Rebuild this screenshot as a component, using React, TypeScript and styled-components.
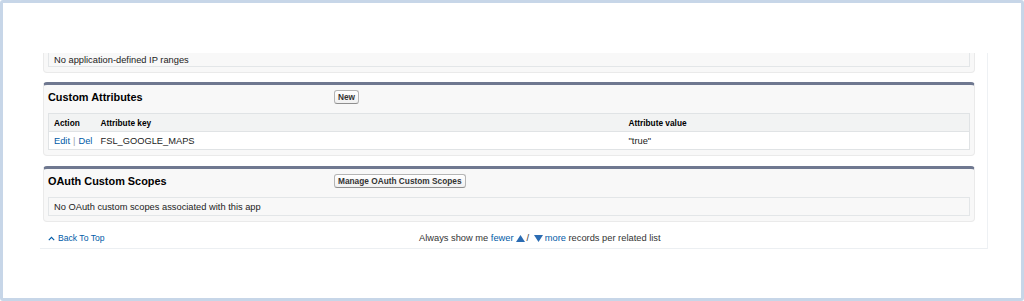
import React from 'react';
import styled, { createGlobalStyle } from 'styled-components';

const GlobalStyle = createGlobalStyle`
  html, body {
    margin: 0;
    padding: 0;
    background: #ffffff;
  }
  body {
    font-family: "Liberation Sans", Arial, sans-serif;
  }
`;

// Styles
const Frame = styled.div`
  box-sizing: border-box;
  width: 1024px;
  height: 301px;
  border: 3px solid #c7d6e8;
  border-radius: 3px;
  background: #ffffff;
  padding-top: 50px;
  overflow: hidden;
`;

const RelatedLists = styled.div`
  margin-left: 37px;
  width: 948px;
  box-sizing: border-box;
  padding: 0 12px 0 3px;
  border-right: 1px solid #eef1f4;
  border-bottom: 1px solid #eceff2;
`;

const Block = styled.div<{ $cut?: boolean; $gap?: number }>`
  box-sizing: border-box;
  background: #f8f8f8;
  border: 1px solid #eaeaea;
  border-top: ${(p) => (p.$cut ? 'none' : '3px solid #6f7890')};
  border-radius: ${(p) => (p.$cut ? '0 0 4px 4px' : '4px')};
  margin-top: ${(p) => p.$gap ?? 0}px;
  padding: 0 4px 5px;
`;

const BlockHeader = styled.div`
  display: flex;
  align-items: center;
  padding: 5px 0;
`;

const Title = styled.h3`
  margin: 0;
  width: 286px;
  flex-shrink: 0;
  font-size: 10.9px;
  font-weight: bold;
  color: #000;
  line-height: 14px;
`;

const Button = styled.button`
  font-family: "Liberation Sans", Arial, sans-serif;
  font-size: 8.3px;
  font-weight: bold;
  color: #333;
  background: linear-gradient(#ffffff, #f1f1f1);
  border: 1px solid #b5b5b5;
  border-bottom-color: #8f8f8f;
  border-radius: 3px;
  padding: 0 3px;
  margin: 0;
  line-height: 12px;
  cursor: pointer;
`;

const NoRecords = styled.div<{ $cut?: boolean }>`
  box-sizing: border-box;
  height: ${(p) => (p.$cut ? 14 : 19)}px;
  margin-top: ${(p) => (p.$cut ? 0 : 4)}px;
  display: flex;
  align-items: center;
  padding: 0 5px;
  font-size: 9.3px;
  color: #222;
  background: #f8f8f8;
  border: 1px solid #e3e6e8;
  border-top: ${(p) => (p.$cut ? 'none' : '1px solid #e3e6e8')};
`;

const Table = styled.table`
  width: 100%;
  table-layout: fixed;
  margin-top: 4px;
  border-collapse: collapse;
  border: 1px solid #e0e3e5;
  background: #ffffff;
  font-size: 9.3px;
`;

const Th = styled.th<{ $w?: number }>`
  box-sizing: border-box;
  width: ${(p) => (p.$w ? `${p.$w}px` : 'auto')};
  height: 18px;
  padding: 0 5px;
  text-align: left;
  font-size: 8.3px;
  font-weight: bold;
  color: #000;
  background: #f2f3f3;
  border-bottom: 1px solid #e0e3e5;
`;

const Td = styled.td`
  height: 17px;
  padding: 0 4px 0 5px;
  color: #222;
  white-space: nowrap;
`;

const Link = styled.a`
  color: #015ba7;
  text-decoration: none;
  cursor: pointer;
`;

const Pipe = styled.span`
  color: #9aa4ad;
  margin: 0 3px;
`;

const Footer = styled.div`
  display: flex;
  align-items: center;
  height: 20px;
  margin-top: 6px;
  padding-left: 5px;
  font-size: 9.3px;
  color: #333;
`;

const BackToTop = styled(Link)`
  display: flex;
  align-items: center;
  gap: 3px;
  font-size: 8.6px;
`;

const ShowMore = styled.div`
  margin: 0 auto;
  display: flex;
  align-items: center;
  white-space: pre;
`;

const Arrow = styled.svg`
  width: 9px;
  height: 7px;
  margin: 0 2px;
  fill: #2b6cb3;
`;

const CustomAttributes = () => (
  <Block $gap={9}>
    <BlockHeader>
      <Title>Custom Attributes</Title>
      <Button>New</Button>
    </BlockHeader>
    <Table>
      <thead>
        <tr>
          <Th $w={47}>Action</Th>
          <Th $w={528}>Attribute key</Th>
          <Th>Attribute value</Th>
        </tr>
      </thead>
      <tbody>
        <tr>
          <Td>
            <Link>Edit</Link>
            <Pipe>|</Pipe>
            <Link>Del</Link>
          </Td>
          <Td>FSL_GOOGLE_MAPS</Td>
          <Td>"true"</Td>
        </tr>
      </tbody>
    </Table>
  </Block>
);

const OAuthScopes = () => (
  <Block $gap={10}>
    <BlockHeader>
      <Title>OAuth Custom Scopes</Title>
      <Button>Manage OAuth Custom Scopes</Button>
    </BlockHeader>
    <NoRecords>No OAuth custom scopes associated with this app</NoRecords>
  </Block>
);

const App = () => {
  return (
    <>
      <GlobalStyle />
      <Frame>
        <RelatedLists>
          <Block $cut>
            <NoRecords $cut>No application-defined IP ranges</NoRecords>
          </Block>
          <CustomAttributes />
          <OAuthScopes />
          <Footer>
            <BackToTop>
              <svg width="7" height="5" viewBox="0 0 7 5">
                <path d="M0.8 4.2 L3.5 1.3 L6.2 4.2" stroke="#015ba7" strokeWidth="1.1" fill="none" />
              </svg>
              Back To Top
            </BackToTop>
            <ShowMore>
              {'Always show me '}
              <Link>fewer</Link>
              <Arrow viewBox="0 0 9 7">
                <path d="M0 7 L4.5 0 L9 7 Z" />
              </Arrow>
              {'/ '}
              <Arrow viewBox="0 0 9 7">
                <path d="M0 0 L9 0 L4.5 7 Z" />
              </Arrow>
              <Link>more</Link>
              {' records per related list'}
            </ShowMore>
          </Footer>
        </RelatedLists>
      </Frame>
    </>
  );
};

export default App;
